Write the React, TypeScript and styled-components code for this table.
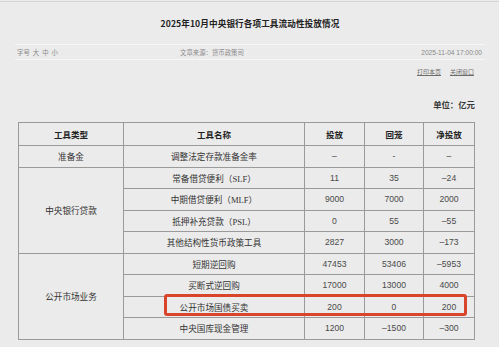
import * as React from 'react';
import styled, { createGlobalStyle } from 'styled-components';

const GlobalStyle = createGlobalStyle`
    html, body {
        margin: 0;
        padding: 0;
        background: #ebebeb;
    }
    body {
        font-family: "Noto Sans CJK SC", "Liberation Sans", sans-serif;
        color: #333;
    }
`;

const Page = styled.div`
    width: 499px;
    height: 347px;
    overflow: hidden;
    box-sizing: border-box;
    padding: 0 14px 0 15px;
    border-top: 1px solid #d4d4d4;
    margin-top: 1px;
`;

const Header = styled.div`
    height: 42px;
    display: flex;
    justify-content: center;
    align-items: center;
`;

const Title = styled.h1`
    margin: 0;
    font-size: 8.6px;
    font-weight: 700;
    color: #222;
    letter-spacing: 0.1px;
`;

const InfoRow = styled.div`
    height: 14px;
    display: grid;
    grid-template-columns: 163px 1fr auto;
    align-items: center;
    border-top: 1px solid #f6f6f6;
    border-bottom: 1px solid #f6f6f6;
    padding: 0 3px 0 2px;
    font-size: 6.4px;
    color: #8a8a8a;
`;

const SizeSwitch = styled.div`
    display: flex;
    gap: 3px;
`;

const DateText = styled.span`
    font-family: "Liberation Sans", sans-serif;
    font-size: 6.6px;
`;

const LinksRow = styled.div`
    height: 22px;
    display: flex;
    justify-content: flex-end;
    align-items: center;
    gap: 9px;
    padding-right: 11px;
`;

const PageLink = styled.a`
    font-size: 6px;
    color: #6c6c6c;
    text-decoration: underline;
`;

const UnitRow = styled.div`
    margin-top: 14px;
    height: 16px;
    display: flex;
    justify-content: flex-end;
    align-items: center;
    padding-right: 10px;
    font-size: 8.4px;
    font-weight: 700;
    color: #3a3a3a;
`;

const TableWrap = styled.div`
    position: relative;
    margin: 10px 11px 0 3px;
`;

const Table = styled.table`
    width: 456px;
    table-layout: fixed;
    border-collapse: collapse;
    font-size: 8.5px;
`;

const HeadCell = styled.th`
    height: 22px;
    padding: 0;
    border: 1px solid #9a9a9a;
    font-weight: 700;
    color: #222;
    text-align: center;
`;

const Cell = styled.td<{ $num?: boolean }>`
    height: 20.5px;
    padding: 0;
    border: 1px solid #9a9a9a;
    text-align: center;
    color: ${p => (p.$num ? '#4a4a4a' : '#333')};
    font-family: ${p => (p.$num ? '"Liberation Sans", sans-serif' : 'inherit')};
    font-size: ${p => (p.$num ? '8.6px' : '8.6px')};
`;

const Latin = styled.span`
    font-family: "Liberation Serif", serif;
`;

const Highlight = styled.div`
    position: absolute;
    left: 146px;
    top: 172px;
    width: 303px;
    height: 22px;
    box-sizing: border-box;
    border: 3px solid #d9452b;
    border-radius: 3px;
    pointer-events: none;
`;

interface IRow {
    name: React.ReactNode;
    out: string;
    back: string;
    net: string;
}

interface IGroup {
    type: string;
    rows: IRow[];
}

const groups: IGroup[] = [
    {
        type: '准备金',
        rows: [{ name: '调整法定存款准备金率', out: '–', back: '-', net: '–' }],
    },
    {
        type: '中央银行贷款',
        rows: [
            { name: <>常备借贷便利（<Latin>SLF</Latin>）</>, out: '11', back: '35', net: '–24' },
            { name: <>中期借贷便利（<Latin>MLF</Latin>）</>, out: '9000', back: '7000', net: '2000' },
            { name: <>抵押补充贷款（<Latin>PSL</Latin>）</>, out: '0', back: '55', net: '–55' },
            { name: '其他结构性货币政策工具', out: '2827', back: '3000', net: '–173' },
        ],
    },
    {
        type: '公开市场业务',
        rows: [
            { name: '短期逆回购', out: '47453', back: '53406', net: '–5953' },
            { name: '买断式逆回购', out: '17000', back: '13000', net: '4000' },
            { name: '公开市场国债买卖', out: '200', back: '0', net: '200' },
            { name: '中央国库现金管理', out: '1200', back: '–1500', net: '–300' },
        ],
    },
];

const App = () => {
    return (
        <>
            <GlobalStyle />
            <Page>
                <Header>
                    <Title>2025年10月中央银行各项工具流动性投放情况</Title>
                </Header>
                <InfoRow>
                    <SizeSwitch>
                        <span>字号</span>
                        <span>大</span>
                        <span>中</span>
                        <span>小</span>
                    </SizeSwitch>
                    <span>文章来源：货币政策司</span>
                    <DateText>2025-11-04 17:00:00</DateText>
                </InfoRow>
                <LinksRow>
                    <PageLink>打印本页</PageLink>
                    <PageLink>关闭窗口</PageLink>
                </LinksRow>
                <UnitRow>单位：亿元</UnitRow>
                <TableWrap>
                    <Table>
                        <colgroup>
                            <col style={{ width: 105 }} />
                            <col style={{ width: 181 }} />
                            <col style={{ width: 60 }} />
                            <col style={{ width: 59 }} />
                            <col style={{ width: 51 }} />
                        </colgroup>
                        <thead>
                            <tr>
                                <HeadCell>工具类型</HeadCell>
                                <HeadCell>工具名称</HeadCell>
                                <HeadCell>投放</HeadCell>
                                <HeadCell>回笼</HeadCell>
                                <HeadCell>净投放</HeadCell>
                            </tr>
                        </thead>
                        <tbody>
                            {groups.map(group =>
                                group.rows.map((row, i) => (
                                    <tr key={group.type + i}>
                                        {i === 0 && <Cell rowSpan={group.rows.length}>{group.type}</Cell>}
                                        <Cell>{row.name}</Cell>
                                        <Cell $num>{row.out}</Cell>
                                        <Cell $num>{row.back}</Cell>
                                        <Cell $num>{row.net}</Cell>
                                    </tr>
                                ))
                            )}
                        </tbody>
                    </Table>
                    <Highlight />
                </TableWrap>
            </Page>
        </>
    );
};

export default App;
